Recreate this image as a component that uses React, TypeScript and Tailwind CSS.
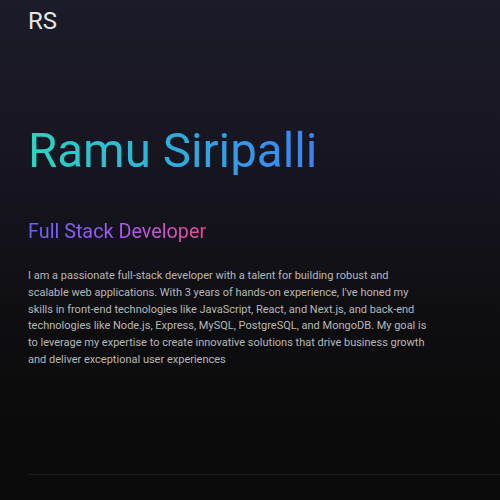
import React from "react";

export default function App() {
  return (
    <div
      className="w-[500px] h-[500px] overflow-hidden bg-[linear-gradient(to_bottom,#1c1b29_0%,#15141e_40%,#0e0e11_65%,#0b0b0b_85%)]"
      style={{ fontFamily: "Roboto, 'Noto Sans', sans-serif" }}
    >
      <header className="pl-7 pt-[5px]">
        <div className="text-2xl leading-8 text-[#e6e6e6]">RS</div>
      </header>
      <main className="pl-7">
        <h1 className="mt-[90px] text-[47.5px] leading-[48px] font-normal bg-gradient-to-r from-[#2dd4bf] to-[#3b82f6] bg-clip-text text-transparent w-fit">
          Ramu Siripalli
        </h1>
        <h2 className="mt-[43px] text-[19.8px] leading-7 bg-gradient-to-r from-[#6366f1] via-[#a855f7] to-[#ec4899] bg-clip-text text-transparent w-fit">
          Full Stack Developer
        </h2>
        <p className="mt-[22px] w-[403px] text-[11px] leading-[16.8px] text-[#b8b8b8]">
          I am a passionate full-stack developer with a talent for building robust and scalable web
          applications. With 3 years of hands-on experience, I've honed my skills in front-end
          technologies like JavaScript, React, and Next.js, and back-end technologies like Node.js,
          Express, MySQL, PostgreSQL, and MongoDB. My goal is to leverage my expertise to create
          innovative solutions that drive business growth and deliver exceptional user experiences
        </p>
        <div className="mt-[105px] border-t border-[#1c1c1c]" />
      </main>
    </div>
  );
}
